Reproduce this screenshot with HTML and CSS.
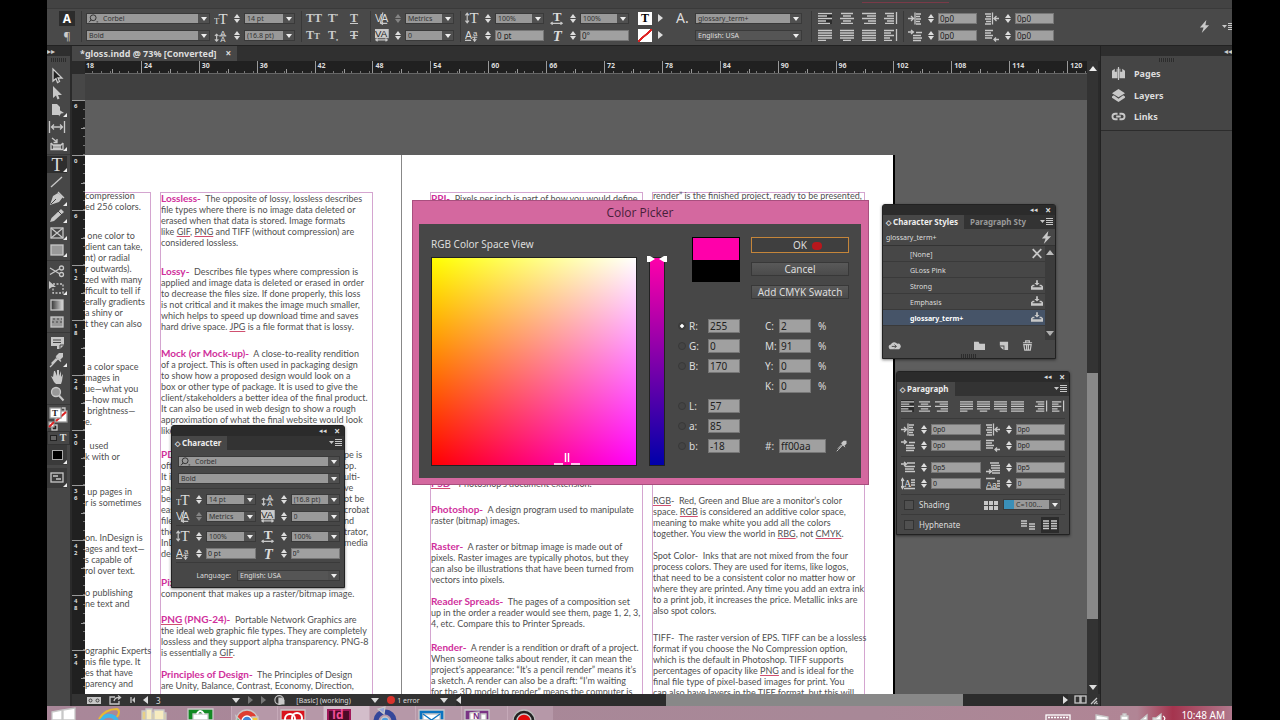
FILE: index.html
```html
<!DOCTYPE html>
<html lang="en">
<head>
<meta charset="utf-8">
<title>gloss.indd</title>
<link rel="stylesheet" href="styles.css">
</head>
<body>
<svg class="defs" aria-hidden="true">
  <symbol id="left" viewBox="0 0 14 12"><path d="M0 1.500h14M0 4h9M0 6.500h14M0 9h8M0 11.500h12"/></symbol>
  <symbol id="center" viewBox="0 0 14 12"><path d="M1 1.500h12M3 4h8M0 6.500h14M3 9h8M1 11.500h12"/></symbol>
  <symbol id="right" viewBox="0 0 14 12"><path d="M0 1.500h14M5 4h9M0 6.500h14M6 9h8M2 11.500h12"/></symbol>
  <symbol id="jleft" viewBox="0 0 14 12"><path d="M0 1.500h14M0 4h14M0 6.500h14M0 9h14M0 11.500h8"/></symbol>
  <symbol id="jcenter" viewBox="0 0 14 12"><path d="M0 1.500h14M0 4h14M0 6.500h14M0 9h14M3 11.500h8"/></symbol>
  <symbol id="jright" viewBox="0 0 14 12"><path d="M0 1.500h14M0 4h14M0 6.500h14M0 9h14M6 11.500h8"/></symbol>
  <symbol id="jall" viewBox="0 0 14 12"><path d="M0 1.500h14M0 4h14M0 6.500h14M0 9h14M0 11.500h14"/></symbol>
  <symbol id="spine1" viewBox="0 0 14 12"><path d="M1 1.500h9M3 4h7M0 6.500h10M3 9h7M1 11.500h9M12.500 0v12"/></symbol>
  <symbol id="spine2" viewBox="0 0 14 12"><path d="M0 1.500h10M0 4h7M0 6.500h10M0 9h6M0 11.500h8M12.500 0v12"/></symbol>
  <symbol id="indL" viewBox="0 0 14 12"><path d="M0 6h5M3 3.500L5.500 6L3 8.500M7 0v12M8 1.500h5M8 4h4M8 6.500h5M8 9h4M8 11.500h5"/></symbol>
  <symbol id="indR" viewBox="0 0 14 12"><path d="M14 6H10M11.500 3.500L9 6l2.500 2.500M7.500 0v12M0 1.500h6M1 4h5M0 6.500h6M1 9h5M0 11.500h6"/></symbol>
  <symbol id="indF" viewBox="0 0 14 12"><path d="M0 2.500h5M3 .5L5.500 2.500L3 4.500M8 3h6M5 6h8M5 8.500h9M5 11h8"/></symbol>
  <symbol id="indE" viewBox="0 0 14 12"><path d="M0 1h8M0 3.500h6M0 6h8M0 8.500h7M14 10H9M11 8L9 10l2 2"/></symbol>
  <symbol id="spB" viewBox="0 0 14 12"><path d="M0 2.500h5M3 .5L5.500 2.500L3 4.500M6 1.500h8M4 5h10M4 7.500h9M4 10h10"/></symbol>
  <symbol id="spA" viewBox="0 0 14 12"><path d="M4 1.500h9M5 4h9M5 6.500h9M0 10h5M3 8L5.500 10L3 12M6 9h8M6 11.500h8"/></symbol>
  <symbol id="size" viewBox="0 0 16 14"><text x="5" y="13" font-size="17">T</text><text x="0" y="13" font-size="10">T</text></symbol>
  <symbol id="leading" viewBox="0 0 16 14"><text x="7" y="7" font-size="9" class="sans">A</text><text x="7" y="14" font-size="9" class="sans">A</text><path d="M6 7.500h8M3 6v7M1 7.500L3 5.500L5 7.500M1 11.500L3 13.500L5 11.500"/></symbol>
  <symbol id="kern" viewBox="0 0 16 14"><text x="0" y="11" font-size="12" class="sans">V</text><text x="7" y="11" font-size="12" class="sans">A</text><path d="M9 0L6 13M7 12.500h7M9 11L7 12.500L9 14"/></symbol>
  <symbol id="track" viewBox="0 0 16 14"><rect x="0" y="0" width="15" height="9.500" fill="#ccc"/><text x="0" y="9" font-size="11" class="sans dark">VA</text><path d="M1 12h13M3 10.500L1 12l2 1.500M12 10.500L14 12l-2 1.500"/></symbol>
  <symbol id="vscale" viewBox="0 0 16 14"><text x="5" y="12" font-size="17">T</text><path d="M2.500 2v9M.5 3.500L2.500 1L4.500 3.500M.5 9.500L2.500 12L4.500 9.500"/></symbol>
  <symbol id="hscale" viewBox="0 0 16 14"><text x="3" y="10" font-size="15" font-weight="bold">T</text><path d="M1 12.500h13M3 11L1 12.500l2 1.500M12 11L14 12.500l-2 1.500"/></symbol>
  <symbol id="baseline" viewBox="0 0 16 14"><text x="0" y="11" font-size="12" class="sans">A</text><text x="9" y="7" font-size="9" class="sans">a</text><path d="M0 12.500h7M8 9h6M11 8v5M9 11l2 2.500L13 11"/></symbol>
  <symbol id="skew" viewBox="0 0 16 14"><text x="3" y="13" font-size="17" font-style="italic" font-weight="bold">T</text></symbol>
  <symbol id="drop" viewBox="0 0 14 12"><path d="M1.500 2v8M0 3.500L1.500 1L3 3.500M0 8.500L1.500 11L3 8.500M10 2.500h4M10 5h4M10 7.500h4M3 11h11"/><text x="3" y="9" font-size="10">A</text></symbol>
  <symbol id="dropn" viewBox="0 0 14 12"><path d="M0 1h9M11 3.500h3M11 6h3M11 8.500h3M0 11.500h14"/><text x="0" y="10" font-size="9" class="sans">Aa</text></symbol>
  <symbol id="mag" viewBox="0 0 14 12"><circle cx="6" cy="4.500" r="3.500"/><path d="M3.500 7L1 10M10 9.500h2"/></symbol>
  <symbol id="bolt" viewBox="0 0 12 14"><path class="f" d="M8 0L1 8h4L3 14l8-8.500H7z"/></symbol>
  <symbol id="menu" viewBox="0 0 14 10"><path class="f" d="M0 3h5L2.500 6z"/><path d="M6 1.500h7M6 3.500h7M6 5.500h7M6 7.500h7"/></symbol>
  <symbol id="tray" viewBox="0 0 14 12"><path class="f" d="M0 11V7l2-2h2v2H2v1h10V7h-2V5h2l2 2v4zM6 0h2v3h2L7 6L4 3h2z"/></symbol>
  <symbol id="dropper" viewBox="0 0 16 16"><path class="f" d="M10 1h4v4l-3 3-4-4z"/><path d="M9.500 6L3 13l-2 2M7 4.500l5 5M7.500 6.500L2.500 11.500"/></symbol>
</svg>

<div class="screen">
  <header class="control-bar">
    <div class="grp modes">
      <button class="mode on" aria-label="Character formatting">A</button>
      <button class="mode" aria-label="Paragraph formatting">¶</button>
    </div>
    <div class="grp sep fonts">
      <label class="combo find"><svg><use href="#mag"/></svg><select aria-label="Font"><option>Corbel</option></select></label>
      <label class="combo"><select aria-label="Style"><option>Bold</option></select></label>
    </div>
    <div class="grp w52">
      <div class="cell"><svg><use href="#size"/></svg><button class="spin" aria-label="Step size"></button><label class="combo"><select aria-label="Size"><option>14 pt</option></select></label></div>
      <div class="cell"><svg><use href="#leading"/></svg><button class="spin" aria-label="Step leading"></button><label class="combo"><select aria-label="Leading"><option>(16.8 pt)</option></select></label></div>
    </div>
    <div class="grp sep cases">
      <button>TT</button><button>T<sup>•</sup></button><button class="u">T</button>
      <button>T<small>T</small></button><button>T<sub>•</sub></button><button class="s">T</button>
    </div>
    <div class="grp sep">
      <div class="cell"><svg><use href="#kern"/></svg><button class="spin dim" aria-label="Step kerning"></button><label class="combo"><select aria-label="Kerning"><option>Metrics</option></select></label></div>
      <div class="cell"><svg><use href="#track"/></svg><button class="spin" aria-label="Step tracking"></button><label class="combo"><select aria-label="Tracking"><option>0</option></select></label></div>
    </div>
    <div class="grp sep">
      <div class="cell"><svg><use href="#vscale"/></svg><button class="spin" aria-label="Step vertical scale"></button><label class="combo"><select aria-label="Vertical scale"><option>100%</option></select></label></div>
      <div class="cell"><svg><use href="#baseline"/></svg><button class="spin" aria-label="Step baseline"></button><input aria-label="Baseline shift" value="0 pt"></div>
    </div>
    <div class="grp">
      <div class="cell"><svg><use href="#hscale"/></svg><button class="spin" aria-label="Step horizontal scale"></button><label class="combo"><select aria-label="Horizontal scale"><option>100%</option></select></label></div>
      <div class="cell"><svg><use href="#skew"/></svg><button class="spin" aria-label="Step skew"></button><input aria-label="Skew" value="0°"></div>
    </div>
    <div class="grp paint">
      <button class="chip">T</button><button class="play" aria-label="Fill options"></button>
      <button class="chip none" aria-label="Stroke none"></button><button class="play" aria-label="Stroke options"></button>
    </div>
    <div class="grp styles">
      <span class="bigA">A.</span><label class="combo"><select aria-label="Character style"><option>glossary_term+</option></select></label>
      <span></span><label class="combo darkbox"><select aria-label="Language"><option>English: USA</option></select></label>
    </div>
    <div class="grp sep aligns">
      <button class="on" aria-label="Align left"><svg><use href="#left"/></svg></button><button aria-label="Align center"><svg><use href="#center"/></svg></button><button aria-label="Align right"><svg><use href="#right"/></svg></button><button aria-label="Toward spine"><svg><use href="#spine1"/></svg></button>
      <button aria-label="Justify left"><svg><use href="#jleft"/></svg></button><button aria-label="Justify center"><svg><use href="#jcenter"/></svg></button><button aria-label="Justify all"><svg><use href="#jall"/></svg></button><button aria-label="Away from spine"><svg><use href="#spine2"/></svg></button>
    </div>
    <div class="grp sep w39">
      <div class="cell"><svg><use href="#indL"/></svg><button class="spin" aria-label="Step left indent"></button><input aria-label="Left indent" value="0p0"></div>
      <div class="cell"><svg><use href="#indF"/></svg><button class="spin" aria-label="Step first line"></button><input aria-label="First line indent" value="0p0"></div>
    </div>
    <div class="grp w39">
      <div class="cell"><svg><use href="#indR"/></svg><button class="spin" aria-label="Step right indent"></button><input aria-label="Right indent" value="0p0"></div>
      <div class="cell"><svg><use href="#indE"/></svg><button class="spin" aria-label="Step last line"></button><input aria-label="Last line indent" value="0p0"></div>
    </div>
    <div class="bar-end"><svg class="bolt"><use href="#bolt"/></svg><svg class="menu"><use href="#menu"/></svg></div>
  </header>

  <main class="work">
    <nav class="tools">
      <div class="dock-top">▸▸</div>
      <div class="grip"></div>
      <div class="tgroup">
        <button aria-label="Selection"><svg viewBox="0 0 18 16"><path d="M5 1v12l3-2.500 1.500 4 2-1-1.500-3.500h4z" class="hollow"/></svg></button>
        <button aria-label="Direct selection"><svg viewBox="0 0 18 16"><path d="M5 1v12l3-2.500 1.500 4 2-1-1.500-3.500h4z" class="f"/></svg></button>
        <button class="more" aria-label="Page"><svg viewBox="0 0 18 16"><path d="M4 2h5l3 3v8H4z" class="f"/><path d="M10 7l6 4-3 .5-2 3z" class="f"/></svg></button>
        <button aria-label="Gap"><svg viewBox="0 0 18 16"><path d="M1.500 2v12M16.500 2v12M4 8h10M6 5.500L3.500 8L6 10.500M12 5.500L14.500 8L12 10.500"/></svg></button>
        <button class="more" aria-label="Content collector"><svg viewBox="0 0 18 16"><path d="M3 7v6.500h12V7M5 10h8M5 12h8M3 7l2 2h8l2-2M4 2l5 4M9 3v3.500H5.500"/></svg></button>
      </div>
      <div class="tgroup">
        <button class="more sel" aria-label="Type">T</button>
        <button aria-label="Line"><svg viewBox="0 0 18 16"><path d="M3 13L14 3"/></svg></button>
        <button class="more" aria-label="Pen"><svg viewBox="0 0 18 16"><path d="M2 14l3-9 5-3 5 4-4 5z" class="f"/><path d="M10 1l6 6"/><path d="M3 13l5-5" class="k"/></svg></button>
        <button class="more" aria-label="Pencil"><svg viewBox="0 0 18 16"><path d="M2 14l1.500-4L13 1l3 3-10 9z" class="f"/><path d="M10 3l4 4" class="k"/></svg></button>
        <button class="more" aria-label="Frame"><svg viewBox="0 0 18 16"><rect x="3" y="3" width="12" height="10"/><path d="M3 3l12 10M15 3L3 13"/></svg></button>
        <button class="more" aria-label="Rectangle"><svg viewBox="0 0 18 16"><rect x="3" y="3" width="12" height="10" class="g"/></svg></button>
      </div>
      <div class="tgroup">
        <button aria-label="Scissors"><svg viewBox="0 0 18 16"><circle cx="13.500" cy="5" r="2"/><circle cx="13.500" cy="11.500" r="2"/><path d="M2 5l10 6M2 11.500l10-6"/></svg></button>
        <button class="more" aria-label="Free transform"><svg viewBox="0 0 18 16"><rect x="5" y="4" width="10" height="9" stroke-dasharray="2 1.500"/><path d="M1 1v8l3-2h4z" class="f"/></svg></button>
        <button aria-label="Gradient"><svg viewBox="0 0 18 16"><defs><linearGradient id="gr"><stop stop-color="#333"/><stop offset="1" stop-color="#ddd"/></linearGradient></defs><rect x="3" y="3" width="12" height="10" fill="url(#gr)"/></svg></button>
        <button aria-label="Gradient feather"><svg viewBox="0 0 18 16"><rect x="3" y="3" width="12" height="10" class="g"/><path d="M5 5h2M9 5h2M13 5h1M4 8h2M8 8h2M12 8h2" class="k"/></svg></button>
      </div>
      <div class="tgroup">
        <button aria-label="Note"><svg viewBox="0 0 18 16"><path d="M3 2h13v8l-4 4H9v-3H3z" class="f"/><path d="M5 5h8M5 7.500h8M16 10h-4v4" class="k"/></svg></button>
        <button class="more" aria-label="Eyedropper"><svg viewBox="0 0 16 16"><use href="#dropper"/></svg></button>
        <button aria-label="Hand"><svg viewBox="0 0 18 16"><path d="M5 8L3 7l3 6 2 2h5l1-3 1-7-2 3V2l-2 5V1H9v6L7 2H6z" class="f"/></svg></button>
        <button aria-label="Zoom"><svg viewBox="0 0 18 16"><circle cx="8" cy="6" r="4.500" class="g"/><path d="M11 9.500l4.500 5" class="thick"/></svg></button>
      </div>
      <div class="fillstroke"><svg viewBox="0 0 20 24"><rect x="7" y="4" width="12" height="11" class="w"/><path d="M8 14L18 5" class="red"/><rect x="2" y="1" width="11" height="10" class="w"/><text x="4" y="9" font-size="9" class="dark" font-weight="bold">T</text><rect x="4" y="18" width="5" height="5" class="hollow"/><rect x="1" y="15" width="5" height="5" class="w"/><path d="M1 20l5-5" class="red"/><path d="M14 1h3v3"/></svg></div>
      <div class="twin"><button aria-label="Formatting affects container"><i></i></button><button>T</button></div>
      <button class="big more" aria-label="Apply color"><i class="black"></i></button>
      <button class="big more" aria-label="Screen mode"><svg viewBox="0 0 18 16"><rect x="3" y="3" width="12" height="9"/><path d="M5 6h5M8 9h5"/></svg></button>
    </nav>

    <section class="doc">
      <div class="tabs"><div class="tab">*gloss.indd @ 73% [Converted]<button aria-label="Close">×</button></div></div>
      <div class="view">
        <div class="corner"></div>
        <div class="hruler"><div class="marks"><span>18</span><span>24</span><span>30</span><span>36</span><span>42</span><span>48</span><span>54</span><span>60</span><span>66</span><span>72</span><span>78</span><span>84</span><span>90</span><span>96</span><span>102</span><span>108</span><span>114</span><span>120</span></div></div>
        <div class="vruler"><span>6</span><span>0</span><span>6</span><span>1 2</span><span>1 8</span><span>2 4</span><span>3 0</span><span>3 6</span><span>4 2</span><span>4 8</span><span>5 4</span></div>
        <div class="canvas">
          <div class="spread">
            <div class="page verso">
              <div class="frame cut cont">
                <p>compression<br>ed 256 colors.</p>
                <p class="g18">&nbsp;one color to<br>dient can take,<br>nt) or radial<br>r outwards).<br>zed with many<br>fficult to tell if<br>erally gradients<br>a shiny or<br>t they can also</p>
                <p class="g32">&nbsp;a color space<br>mages in<br>ue—what you<br>—how much<br>&nbsp;brightness—<br>e.</p>
                <p class="g13">&nbsp;&nbsp;used<br>k with or</p>
                <p class="g24">&nbsp;up pages in<br>r is sometimes</p>
                <p class="g24">on. InDesign is<br>ages and text—<br>s capable of<br>rol over text.</p>
                <p class="g11">o publishing<br>ne text and</p>
                <p class="g36">ographic Experts<br>nis file type. It<br>es that have<br>parency and</p>
              </div>
              <div class="frame">
                <p><b>Lossless-</b>&nbsp; The opposite of lossy, lossless describes<br>file types where there is no image data deleted or<br>erased when that data is stored. Image formats<br>like <u>GIF</u>, <u>PNG</u> and TIFF (without compression) are<br>considered lossless.</p>
                <p class="g18"><b>Lossy-</b>&nbsp; Describes file types where compression is<br>applied and image data is deleted or erased in order<br>to decrease the files size. If done properly, this loss<br>is not critical and it makes the image much smaller,<br>which helps to speed up download time and saves<br>hard drive space. <u>JPG</u> is a file format that is lossy.</p>
                <p class="g16"><b>Mock (or Mock-up)-</b>&nbsp; A close-to-reality rendition<br>of a project. This is often used in packaging design<br>to show how a proposed design would look on a<br>box or other type of package. It is used to give the<br>client/stakeholders a better idea of the final product.<br>It can also be used in web design to show a rough<br>approximation of what the final website would look<br>like.</p>
                <div class="split g13"><span><b>PDF</b></span><span>pe is</span><span>often</span><span>op.</span><span>It is</span><span>ulti-</span><span>page</span><span>ve</span><span>be</span><span>ot be</span><span>easy</span><span>crobat</span><span>files</span><span>nd</span><span>the</span><span>trator,</span><span>InDe</span><span>media</span><span>de</span><span></span></div>
                <p class="g18"><b>Pixel-</b>&nbsp; Short for picture element; a single<br>component that makes up a raster/bitmap image.</p>
                <p class="g15"><b><u>PNG</u> (PNG-24)-</b>&nbsp; Portable Network Graphics are<br>the ideal web graphic file types. They are completely<br>lossless and they support alpha transparency. PNG-8<br>is essentially a <u>GIF</u>.</p>
                <p class="g11"><b>Principles of Design-</b>&nbsp; The Principles of Design<br>are Unity, Balance, Contrast, Economy, Direction,</p>
              </div>
            </div>
            <div class="page recto">
              <div class="frame">
                <p><b><u>PPI</u>-</b>&nbsp; Pixels per inch is part of how you would define</p>
                <p class="under"><b><u>PSD</u>-</b>&nbsp; Photoshop’s document extension.</p>
                <p class="g15"><b>Photoshop-</b>&nbsp; A design program used to manipulate<br>raster (bitmap) images.</p>
                <p class="g15"><b>Raster-</b>&nbsp; A raster or bitmap image is made out of<br>pixels. Raster images are typically photos, but they<br>can also be illustrations that have been turned from<br>vectors into pixels.</p>
                <p class="g11"><b>Reader Spreads-</b>&nbsp; The pages of a composition set<br>up in the order a reader would see them, page 1, 2, 3,<br>4, etc. Compare this to Printer Spreads.</p>
                <p class="g13"><b>Render-</b>&nbsp; A render is a rendition or draft of a project.<br>When someone talks about render, it can mean the<br>project’s appearance: “It’s a pencil render” means it’s<br>a sketch. A render can also be a draft: “I’m waiting<br>for the 3D model to render” means the computer is</p>
              </div>
              <div class="frame cont">
                <p>render” is the finished project, ready to be presented,</p>
                <p class="under2"><u>RGB</u>-&nbsp; Red, Green and Blue are a monitor’s color<br>space. <u>RGB</u> is considered an additive color space,<br>meaning to make white you add all the colors<br>together. You view the world in <u>RBG</u>, not <u>CMYK</u>.</p>
                <p class="g11">Spot Color-&nbsp; Inks that are not mixed from the four<br>process colors. They are used for items, like logos,<br>that need to be a consistent color no matter how or<br>where they are printed. Any time you add an extra ink<br>to a print job, it increases the price. Metallic inks are<br>also spot colors.</p>
                <p class="g16">TIFF-&nbsp; The raster version of EPS. TIFF can be a lossless<br>format if you choose the No Compression option,<br>which is the default in Photoshop. TIFF supports<br>percentages of opacity like <u>PNG</u> and is ideal for the<br>final file type of pixel-based images for print. You<br>can also have layers in the TIFF format, but this will</p>
              </div>
            </div>
          </div>
        </div>
        <div class="vscroll"><i class="up"></i><div class="thumb"></div><i class="down"></i></div>
      </div>
      <footer class="status">
        <div class="nav">
          <svg viewBox="0 0 50 12" class="first"><rect x="2" y="3" width="14" height="7" class="f"/><circle cx="5.500" cy="6.500" r="1.500" class="k"/><circle cx="12.500" cy="6.500" r="1.500" class="k"/><path d="M30 3h-5v7h9V7M29 7q1-4 6-3.500M33 1.500L35.500 3.500L33 5.500"/><path d="M46 3v6"/><path class="f" d="M50 3v6l-3-3z"/></svg>
          <i class="lt"></i><span class="num">3</span><i class="dn"></i><i class="rt dim"></i><i class="rt dim"></i>
          <svg viewBox="0 0 16 12" class="pf"><circle cx="6" cy="6" r="5"/><path d="M5 3h4l3 3v5H5z" class="f"/></svg>
          <span class="grow">[Basic] (working)</span><i class="dn"></i><b class="err"></b><span class="grow">1 error</span><i class="dn"></i>
        </div>
        <div class="hscroll"><i class="lt"></i><div class="thumb"></div><i class="rt"></i></div>
        <svg viewBox="0 0 26 12" class="end"><rect x="1" y="2" width="5" height="7"/><rect x="7" y="2" width="5" height="7"/><path d="M17 10l6-6M20 10l3-3M22.500 10l1-1"/></svg>
      </footer>
    </section>

    <aside class="dock">
      <div class="dock-top r">◂◂</div>
      <div class="grip"></div>
      <button><svg viewBox="0 0 16 14"><path class="f" d="M1 4l3-2v3h2V2h1v10H1zM9 2h1v3h2V2l3 2v8H9z"/><path d="M8 0v14"/></svg>Pages</button>
      <button><svg viewBox="0 0 16 14"><path class="f" d="M8 0l7 4.500L8 9L1 4.500zM1 8l2-1.200L8 10.500l5-3.700L15 8v1.500L8 14L1 9.500z"/></svg>Layers</button>
      <button><svg viewBox="0 0 16 14"><path class="thick" d="M7 4H4.500a3 3 0 0 0 0 6H7M9 4h2.500a3 3 0 0 1 0 6H9M5.500 7h5"/></svg>Links</button>
    </aside>
  </main>

  <footer class="taskbar">
    <button aria-label="Start"><svg viewBox="0 0 28 14"><path fill="#fff" d="M3 6l10-2v10H3zM14 4l12-2v12H14z"/></svg></button>
    <button aria-label="Internet Explorer"><svg viewBox="0 0 28 14"><path d="M5 17a9 9 0 0 1 17-2" stroke="#3fb7ec" stroke-width="4"/><path d="M4 13Q10 3 22 3q4 2 0 8" stroke="#e8b934" stroke-width="2"/></svg></button>
    <button aria-label="File Explorer"><svg viewBox="0 0 28 14"><path fill="#e8d088" d="M1 5h8l2 2h14v7H1z"/><path fill="#f7ecc0" d="M5 3h6v11H5zM13 4h10v10H13z"/></svg></button>
    <button aria-label="Store"><svg viewBox="0 0 28 14"><path fill="#128a22" d="M1 3h25v11H1z"/><path fill="#fff" d="M6 8h15v6H6z"/><path d="M10 8q3-6 7 0" stroke="#fff" stroke-width="2"/></svg></button>
    <button class="open" aria-label="Chrome"><svg viewBox="0 0 28 14"><circle cx="13" cy="15" r="11" fill="#df3f32"/><path fill="#3ba757" d="M2 10l8 8H4z"/><path fill="#f5ca3b" d="M18 11h6v6h-6z"/><circle cx="13" cy="15" r="5" fill="#4285d8" stroke="#fff"/></svg></button>
    <button class="open" aria-label="Creative Cloud"><svg viewBox="0 0 28 14"><path fill="#d9141d" d="M1 4h24v10H1z"/><circle cx="10" cy="13" r="5" stroke="#fff" stroke-width="2"/><circle cx="17" cy="12" r="5" stroke="#fff" stroke-width="2"/></svg></button>
    <button class="open cur" aria-label="InDesign"><svg viewBox="0 0 28 14"><path fill="#4b0a28" stroke="#a1195a" stroke-width="2" d="M2 4h22v14H2z"/></svg><span>Id</span></button>
    <button class="open" aria-label="Sync"><svg viewBox="0 0 28 14"><circle cx="13" cy="15" r="9" stroke="#35479a" stroke-width="5"/><path fill="#9aa8d8" d="M6 3l7-2-1 7z"/><circle cx="13" cy="15" r="4" fill="#4a9be0"/></svg></button>
    <button class="open" aria-label="Mail"><svg viewBox="0 0 28 14"><path fill="#0a73c0" d="M1 4h25v10H1z"/><path fill="#fff" d="M5 8h17v6H5z"/><path d="M5 8l8.500 6L22 8" stroke="#0a73c0"/></svg></button>
    <button class="open" aria-label="OneNote"><svg viewBox="0 0 28 14"><path fill="#7a3384" d="M1 4h24v10H1z"/><path fill="#fff" d="M6 7l9-1v8H6zM17 8h5v6h-5z"/></svg><span class="small">N</span></button>
    <button class="open" aria-label="Recorder"><svg viewBox="0 0 28 14"><circle cx="14" cy="15" r="11" fill="#222" stroke="#bbb"/><circle cx="14" cy="15" r="7" fill="#e00b0b"/></svg></button>
    <div class="sys">
      <svg viewBox="0 0 124 14"><rect x="1" y="9" width="24" height="8" stroke="#fff"/><path d="M3 11.500h20" stroke="#fff" stroke-dasharray="2 1"/><path fill="#fff" d="M51 9l6 1 6 1v3H51zM76 10h7v4h-7zM78 8h3v2h-3zM96 14l6-5v5zM108 12h3l5-4v6h-8z"/><path d="M118 10q3 2 1 4" stroke="#fff"/></svg>
      <time>10:48 AM</time>
    </div>
  </footer>

  <section class="panel character">
    <div class="ptop"><span>◂◂</span><button aria-label="Close">×</button></div>
    <div class="ptabs"><span class="cur">Character</span><svg class="menu"><use href="#menu"/></svg></div>
    <div class="pbody">
      <label class="combo find"><svg><use href="#mag"/></svg><select aria-label="Font"><option>Corbel</option></select></label>
      <label class="combo"><select aria-label="Style"><option>Bold</option></select></label>
      <div class="pairs line">
        <div class="cell"><svg><use href="#size"/></svg><button class="spin" aria-label="Step size"></button><label class="combo"><select aria-label="Size"><option>14 pt</option></select></label></div>
        <div class="cell"><svg><use href="#leading"/></svg><button class="spin" aria-label="Step leading"></button><label class="combo"><select aria-label="Leading"><option>(16.8 pt)</option></select></label></div>
        <div class="cell"><svg><use href="#kern"/></svg><button class="spin dim" aria-label="Step kerning"></button><label class="combo"><select aria-label="Kerning"><option>Metrics</option></select></label></div>
        <div class="cell"><svg><use href="#track"/></svg><button class="spin" aria-label="Step tracking"></button><label class="combo"><select aria-label="Tracking"><option>0</option></select></label></div>
      </div>
      <div class="pairs line">
        <div class="cell"><svg><use href="#vscale"/></svg><button class="spin" aria-label="Step vertical scale"></button><label class="combo"><select aria-label="Vertical scale"><option>100%</option></select></label></div>
        <div class="cell"><svg><use href="#hscale"/></svg><button class="spin" aria-label="Step horizontal scale"></button><label class="combo"><select aria-label="Horizontal scale"><option>100%</option></select></label></div>
        <div class="cell"><svg><use href="#baseline"/></svg><button class="spin" aria-label="Step baseline"></button><input aria-label="Baseline shift" value="0 pt"></div>
        <div class="cell"><svg><use href="#skew"/></svg><button class="spin" aria-label="Step skew"></button><input aria-label="Skew" value="0°"></div>
      </div>
      <div class="lang line"><label for="lang">Language:</label><div class="combo darkbox"><select id="lang"><option>English: USA</option></select></div></div>
    </div>
  </section>

  <section class="panel charstyles">
    <div class="ptop"><span>◂◂</span><button aria-label="Close">×</button></div>
    <div class="ptabs"><span class="cur">Character Styles</span><span>Paragraph Sty</span><svg class="menu"><use href="#menu"/></svg></div>
    <div class="applied">glossary_term+<svg class="bolt"><use href="#bolt"/></svg></div>
    <div class="listwrap">
      <ul>
        <li>[None]<svg viewBox="0 0 14 12"><path class="thick" d="M2 1l10 10M12 1L2 11"/></svg></li>
        <li>GLoss Pink</li>
        <li>Strong<svg><use href="#tray"/></svg></li>
        <li>Emphasis<svg><use href="#tray"/></svg></li>
        <li class="sel">glossary_term+<svg><use href="#tray"/></svg></li>
      </ul>
      <div class="mini"><i class="up"></i><i class="dn"></i></div>
    </div>
    <div class="pfoot">
      <svg viewBox="0 0 14 12"><path class="f" d="M1 9a3 3 0 0 1 2-4 4 4 0 0 1 7-1 3 3 0 0 1 3 5l-1 1H2z"/><path class="k" d="M4 7h5M7 5l2 2-2 2"/></svg>
      <svg viewBox="0 0 14 12"><path class="f" d="M1 2h5l1 2h6v7H1z"/></svg>
      <svg viewBox="0 0 14 12"><path class="f" d="M3 2h9v9H8V6H3z"/><path class="f" d="M3 7l4 4V7z"/></svg>
      <svg viewBox="0 0 14 12"><path d="M2 3h10M5 3V1h4v2M3 5l1 6h6l1-6zM6 5v6M8 5v6"/></svg>
    </div>
    <div class="grip"></div>
  </section>

  <section class="panel paragraph">
    <div class="ptop"><span>◂◂</span><button aria-label="Close">×</button></div>
    <div class="ptabs"><span class="cur">Paragraph</span><svg class="menu"><use href="#menu"/></svg></div>
    <div class="pbody">
      <div class="alignrow">
        <div><button class="on" aria-label="Align left"><svg><use href="#left"/></svg></button><button aria-label="Align center"><svg><use href="#center"/></svg></button><button aria-label="Align right"><svg><use href="#right"/></svg></button></div>
        <div><button aria-label="Justify left"><svg><use href="#jleft"/></svg></button><button aria-label="Justify center"><svg><use href="#jcenter"/></svg></button><button aria-label="Justify right"><svg><use href="#jright"/></svg></button><button aria-label="Justify all"><svg><use href="#jall"/></svg></button></div>
        <div><button aria-label="Toward spine"><svg><use href="#spine1"/></svg></button><button aria-label="Away from spine"><svg><use href="#spine2"/></svg></button></div>
      </div>
      <div class="pairs line">
        <div class="cell"><svg><use href="#indL"/></svg><button class="spin" aria-label="Step"></button><input aria-label="Left indent" value="0p0"></div>
        <div class="cell"><svg><use href="#indR"/></svg><button class="spin" aria-label="Step"></button><input aria-label="Right indent" value="0p0"></div>
        <div class="cell"><svg><use href="#indF"/></svg><button class="spin" aria-label="Step"></button><input aria-label="First line indent" value="0p0"></div>
        <div class="cell"><svg><use href="#indE"/></svg><button class="spin" aria-label="Step"></button><input aria-label="Last line indent" value="0p0"></div>
      </div>
      <div class="pairs line">
        <div class="cell"><svg><use href="#spB"/></svg><button class="spin" aria-label="Step"></button><input aria-label="Space before" value="0p5"></div>
        <div class="cell"><svg><use href="#spA"/></svg><button class="spin" aria-label="Step"></button><input aria-label="Space after" value="0p5"></div>
        <div class="cell"><svg><use href="#drop"/></svg><button class="spin" aria-label="Step"></button><input aria-label="Drop cap lines" value="0"></div>
        <div class="cell"><svg><use href="#dropn"/></svg><button class="spin" aria-label="Step"></button><input aria-label="Drop cap characters" value="0"></div>
      </div>
      <div class="opt line"><input type="checkbox" id="shade"><label for="shade">Shading</label><svg viewBox="0 0 14 12"><path class="f" d="M0 2h14v9H0z"/><path class="k" d="M0 6.500h14M4.500 2v9M9.500 2v9"/></svg><label class="combo tint"><i></i><select aria-label="Shading color"><option>C=100...</option></select></label></div>
      <div class="opt line"><input type="checkbox" id="hyph"><label for="hyph">Hyphenate</label><svg viewBox="0 0 14 12"><path d="M0 2h6M0 4.500h6M0 7h6M8 5h6M8 7.500h6M8 10h6"/></svg><svg viewBox="0 0 14 12" class="on"><path d="M0 2h6M0 4.500h6M0 7h6M0 9.500h6M8 2h6M8 4.500h6M8 7h6M8 9.500h6"/></svg></div>
    </div>
  </section>

  <section class="dialog" role="dialog" aria-labelledby="dt">
    <h1 id="dt">Color Picker</h1>
    <div class="dbody">
      <div class="space">
        <h2>RGB Color Space View</h2>
        <div class="field"><svg viewBox="0 0 28 12" class="mark"><path d="M11.500 0v9M14.500 0v9M0 11h9M17 11h9"/></svg></div>
      </div>
      <div class="slider"><svg viewBox="0 0 20 8"><path d="M0 1h3l5 3-5 3H0zM20 1h-3l-5 3 5 3h3z"/></svg></div>
      <div class="values">
        <div class="swatch"><i></i></div>
        <div class="actions"><button class="ok">OK<i class="pointer"></i></button><button>Cancel</button><button>Add CMYK Swatch</button></div>
        <div class="rgb">
          <input type="radio" name="ch" id="r" checked><label for="r">R:</label><input aria-label="Red" value="255">
          <input type="radio" name="ch" id="g"><label for="g">G:</label><input aria-label="Green" value="0">
          <input type="radio" name="ch" id="b"><label for="b">B:</label><input aria-label="Blue" value="170">
          <div class="blank"></div>
          <input type="radio" name="ch" id="l"><label for="l">L:</label><input aria-label="Lightness" value="57">
          <input type="radio" name="ch" id="la"><label for="la">a:</label><input aria-label="Lab a" value="85">
          <input type="radio" name="ch" id="lb"><label for="lb">b:</label><input aria-label="Lab b" value="-18">
        </div>
        <div class="cmyk">
          <label for="c">C:</label><input id="c" value="2"><span>%</span>
          <label for="m">M:</label><input id="m" value="91"><span>%</span>
          <label for="y">Y:</label><input id="y" value="0"><span>%</span>
          <label for="k">K:</label><input id="k" value="0"><span>%</span>
          <div class="blank"></div>
          <div class="blank"></div>
          <div class="hex"><label for="hex">#:</label><input id="hex" value="ff00aa"><svg><use href="#dropper"/></svg></div>
        </div>
      </div>
    </div>
  </section>
</div>
</body>
</html>
```

FILE: styles.css
```css
* { box-sizing: border-box; }
body { margin: 0; background: #000; color: #ddd; font-family: "Noto Sans", sans-serif; font-size: 8px; line-height: 11px; }
.defs { display: none; }
button, input, select { font: inherit; color: inherit; margin: 0; padding: 0; border: 0; background: none; border-radius: 0; min-width: 0; }
svg { display: block; width: 14px; height: 12px; fill: none; stroke: #c8c8c8; stroke-width: 1.3; overflow: visible; }
svg text { fill: #dcdcdc; stroke: none; font-family: "Liberation Serif", serif; }
svg text.sans { font-family: "Liberation Sans", sans-serif; }
svg text.dark { fill: #222; }
.f { fill: #c8c8c8; stroke: none; }
.g { fill: #999; }
.w { fill: #fff; stroke: #999; }
.k { stroke: #444; fill: none; stroke-width: 1; }
.hollow { fill: #222; stroke: #ccc; }
.thick { stroke-width: 2; }
.red { stroke: #d22; stroke-width: 2; }

.screen { position: relative; display: flex; flex-direction: column; height: 100vh; margin: 0 48px 0 47px; overflow: hidden; background: #474747; }

/* control bar */
.control-bar { display: flex; align-items: center; flex: none; height: 46px; padding: 8px 0 0 12px; border-bottom: 1px solid #222; background: linear-gradient(#7a3a48, #7a3a48) 815px 2px / 87px 1px no-repeat, linear-gradient(#434343 8px, #3a3a3a 8px, #3a3a3a 9px, #494949 9px); }
.grp { display: grid; grid-auto-rows: 14px; row-gap: 3px; margin-right: 6px; align-items: center; flex: none; width: 79px; }
.sep { border-left: 1px solid #383838; padding-left: 4px; width: 84px; }
.sep.w39 { width: 74px; margin-right: 8px; }
.grp.w39:not(.sep) { width: 69px; }
.modes { width: 16px; }
.mode { height: 15px; color: #ccc; font-size: 11px; }
.mode.on { background: #2c2c2c; color: #fff; font-weight: bold; font-size: 12px; }
.grp.fonts { width: 129px; margin-right: 4px; }
.w52 { width: 81px; }
.cell { display: grid; grid-template-columns: 16px 12px 1fr; column-gap: 1px; align-items: center; }
.cell svg { height: 13px; }
.combo { position: relative; display: flex; height: 11px; border: 1px solid #3a3a3a; background: #999; color: #333; font-size: 7px; }
.combo select { flex: 1; appearance: none; padding: 0 0 0 2px; line-height: 9px; height: 9px; }
.combo::after { content: ""; width: 11px; flex: none; background: #505050; }
.combo::before { content: ""; position: absolute; right: 2px; top: 3px; border: 3px solid transparent; border-top: 4px solid #eee; border-bottom: 0; }
.combo.find svg { width: 14px; height: 10px; stroke: #222; stroke-width: 1; flex: none; }
.darkbox { background: #555; color: #ddd; }
.cell input { width: 100%; height: 11px; background: #a0a0a0; color: #222; border: 1px solid #777; padding-left: 1px; }
.spin { position: relative; width: 8px; height: 11px; justify-self: center; }
.spin::before, .spin::after { content: ""; position: absolute; left: 1px; border: 3px solid transparent; }
.spin::before { top: 1px; border-top: 0; border-bottom: 4px solid #ddd; }
.spin::after { bottom: 1px; border-bottom: 0; border-top: 4px solid #ddd; }
.spin.dim { opacity: .4; }
.grp.cases { grid-template-columns: repeat(3, 14px); column-gap: 8px; width: 63px; }
.cases button { font: bold 12px/14px "Liberation Serif", serif; color: #ccc; white-space: nowrap; text-align: left; height: 14px; }
.cases sup, .cases sub { font-size: 6px; line-height: 0; }
.cases small { font-size: 9px; }
.cases .u { text-decoration: underline; }
.cases .s { text-decoration: line-through; }
.paint { grid-template-columns: 14px 8px; column-gap: 4px; width: 26px; margin: 0 12px 0 3px; }
.chip { height: 13px; background: #fff; color: #000; font: bold 12px/13px "Liberation Serif", serif; }
.none { background: linear-gradient(to bottom right, #fff 44%, #d22 45%, #d22 55%, #fff 56%); }
.play { justify-self: center; width: 0; height: 8px; border: 4px solid transparent; border-left: 5px solid #ddd; border-right: 0; }
.styles { grid-template-columns: 16px 107px; column-gap: 3px; width: 126px; margin-right: 9px; }
.bigA { font-size: 14px; line-height: 14px; }
.grp.aligns { grid-template-columns: repeat(4, 14px); column-gap: 8px; width: 86px; padding-left: 6px; }
.on { background: #2c2c2c; }
.bar-end { display: flex; flex: 1; justify-content: flex-end; align-items: center; gap: 12px; height: 20px; margin-right: -4px; }
.bolt { width: 11px; height: 13px; }
.menu { width: 14px; height: 10px; stroke-width: 1; }

/* work area */
.work { flex: 1; min-height: 0; display: flex; }
.tools { flex: none; width: 25px; border-right: 2px solid #2a2a2a; background: #474747; display: flex; flex-direction: column; }
.dock-top { height: 10px; background: #2e2e2e; font-size: 8px; line-height: 9px; color: #ccc; }
.dock-top.r { text-align: right; }
.grip { width: 16px; height: 4px; margin: 2px auto; flex: none; background: repeating-linear-gradient(90deg, #2c2c2c 0 1px, #474747 1px 2px); }
.tgroup { border-bottom: 1px solid #383838; padding-bottom: 2px; margin-top: 1px; }
.tools .grip + .tgroup { margin-top: 3px; padding-bottom: 2px; }
.tgroup button, .big { position: relative; display: grid; place-items: center; width: 20px; height: 17px; font: 18px/16px "Liberation Serif", serif; }
.tools svg { width: 18px; height: 16px; }
.more::after { content: ""; position: absolute; right: 0; bottom: 1px; border: 2px solid #eee; border-left-color: transparent; border-top-color: transparent; }
.sel { background: #2e2e2e; }
.tools .fillstroke { padding: 2px 0 0 1px; }
.tools .fillstroke svg { width: 20px; height: 24px; }
.twin { display: grid; grid-template-columns: 10px 10px; height: 14px; font: bold 10px/12px "Liberation Serif", serif; align-items: center; border: 1px solid #333; }
.twin i { display: block; height: 6px; width: 7px; margin: auto; background: #666; border: 1px solid #222; }
.big { height: 20px; margin-bottom: 3px; background: #3a3a3a; }
.black { width: 11px; height: 10px; background: #000; border: 1px solid #aaa; }
.doc { flex: 1; min-width: 0; display: flex; flex-direction: column; }
.tabs { height: 15px; flex: none; background: #303030; display: flex; }
.tab { background: #474747; font-weight: bold; font-size: 9px; line-height: 15px; padding: 0 6px 0 8px; display: flex; gap: 9px; white-space: nowrap; }
.tab button { font-size: 10px; }
.view { flex: 1; min-height: 0; display: grid; grid-template: 13px 1fr / 13px 1fr 13px; }
.corner { background: #2b2b2b; }
.hruler { background: #202020; overflow: hidden; border-bottom: 1px solid #666; }
.marks { display: flex; min-width: 1042px; margin-left: -2px; height: 12px; }
.marks span { flex: 1; border-left: 1px solid #999; padding-left: 2px; font-size: 7px; font-weight: bold; line-height: 9px; background: linear-gradient(#999, #999) 50% 100% / 1px 4px no-repeat, repeating-linear-gradient(90deg, #202020 0 8px, #777 8px 9px) 0 100% / 100% 2px no-repeat; }
.vruler { grid-row: 2; background: linear-gradient(#474747 26px, #202020 26px); padding-top: 26px; overflow: hidden; }
.vruler span { display: block; height: 55px; border-top: 1px solid #999; padding: 2px 7px 0 2px; font-size: 6px; font-weight: bold; line-height: 7px; background: linear-gradient(#999, #999) 100% 50% / 4px 1px no-repeat, repeating-linear-gradient(#202020 0 8px, #777 8px 9px) 100% 0 / 2px 100% no-repeat; }
.canvas { position: relative; overflow: hidden; background: linear-gradient(#404040 26px, #5e5e5e 26px); grid-row: 2; }
.spread { position: absolute; left: 0; top: 81px; bottom: 0; display: flex; background: #fff; border-right: 2px solid #000; }
.page { display: flex; gap: 9px; padding-top: 37px; }
.verso { width: 317px; border-right: 1px solid #888; }
.recto { width: 491px; padding-left: 28px; }
.frame { flex: none; width: 213px; border: 1px solid #d4a5d0; border-bottom: 0; color: #505050; font-family: Lato, sans-serif; font-size: 9px; line-height: 11px; white-space: nowrap; }
.cut { width: 66px; border-left: 0; }
.frame p { margin: 0; }
.frame.cont p:first-child { margin-top: -3px; }
.frame b { color: #d0309c; font-size: 10px; }
.frame u { text-decoration-color: #d05070; }
.frame .g11 { margin-top: 11px; } .frame .g13 { margin-top: 13px; } .frame .g15 { margin-top: 15px; } .frame .g16 { margin-top: 16px; }
.frame .g18 { margin-top: 18px; } .frame .g24 { margin-top: 24px; } .frame .g32 { margin-top: 32px; } .frame .g36 { margin-top: 36px; }
.frame .under { margin-top: 274px; }
.frame .under2 { margin-top: 294px; }
.split { display: grid; grid-template-columns: 183px 1fr; grid-auto-rows: 11px; }
.vscroll { grid-column: 3; grid-row: 1 / 3; background: #333; display: grid; grid-template-rows: 14px 298fr 246fr 75px; border-right: 2px solid #2a2a2a; }
.vscroll .thumb { grid-row: 3; background: #888; }
.up, .down, .dn, .lt, .rt { width: 0; height: 0; border: 4px solid transparent; flex: none; }
.up { border-top: 0; border-bottom: 5px solid #eee; place-self: center; }
.down, .dn { border-bottom: 0; border-top: 5px solid #ddd; }
.down { grid-row: 4; place-self: end center; margin-bottom: 4px; }
.lt { border-left: 0; border-right: 5px solid #ddd; }
.rt { border-right: 0; border-left: 5px solid #ddd; }
.dim { opacity: .4; }
.status { flex: none; height: 12px; background: #333; display: flex; align-items: center; }
.nav { width: 384px; padding: 0 8px 0 13px; display: flex; align-items: center; gap: 8px; }
.nav .first { width: 50px; }
.num { flex: 1 0 56px; }
.pf { width: 14px; }
.grow { white-space: nowrap; flex: 1 0 auto; font-size: 7px; }
.err { width: 8px; height: 8px; border-radius: 4px; background: #d8332c; flex: none; margin-right: -6px; }
.hscroll { flex: 1; display: grid; grid-template-columns: 5px 204fr 296fr 100fr 5px; align-items: center; background: #2c2c2c; }
.hscroll .thumb { grid-column: 3; height: 12px; background: #888; }
.hscroll .rt { grid-column: 5; }
.status .end { width: 26px; margin-left: 6px; }
.dock { flex: none; width: 132px; background: #454545; border-left: 1px solid #222; }
.dock button { display: flex; align-items: center; gap: 8px; width: 100%; height: 22px; padding-left: 10px; font-size: 9px; font-weight: bold; }
.dock .grip { margin-bottom: 0; }
.dock button svg { width: 15px; height: 13px; }
.dock button:last-child { border-bottom: 1px solid #2c2c2c; height: 25px; padding-bottom: 3px; }

/* taskbar */
.taskbar { flex: none; height: 14px; display: flex; overflow: hidden; background: linear-gradient(90deg, #a98799, #a88897 70%, #b18595 92%, #a5344e 95%, #b0788c); }
.taskbar button { position: relative; width: 46px; height: 14px; padding-left: 2px; flex: none; }
.taskbar button svg { width: 28px; height: 14px; }
.open { border-left: 1px solid #c5a9b8; background: #b698a8; }
.open.cur { background: #d3bdca; }
.taskbar span { position: absolute; left: 8px; top: 2px; font: bold 12px/14px "Open Sans", sans-serif; color: #f04e98; }
.taskbar .small { left: 11px; top: 5px; font-size: 8px; line-height: 10px; color: #7a3384; }
.sys { margin-left: auto; display: flex; gap: 12px; padding-right: 7px; }
.sys svg { width: 124px; height: 14px; }
time { color: #fff; font-size: 10px; line-height: 18px; white-space: nowrap; }

/* floating panels */
.panel { position: absolute; width: 174px; background: #474747; border: 1px solid #222; box-shadow: 0 1px 3px rgba(0,0,0,.5); border-radius: 3px 3px 0 0; font-size: 7px; }
.character { left: 124px; top: 425px; }
.charstyles { left: 835px; top: 204px; }
.paragraph { left: 849px; top: 371px; }
.ptop { height: 10px; background: #2b2b2b; display: flex; justify-content: flex-end; gap: 7px; padding-right: 4px; line-height: 10px; color: #ddd; }
.ptop button { font-size: 10px; line-height: 10px; font-weight: bold; }
.ptabs { display: flex; height: 14px; background: #333; line-height: 13px; font-weight: bold; align-items: center; color: #999; }
.ptabs span { padding: 0 6px; height: 14px; white-space: nowrap; font-size: 8px; }
.ptabs .cur { background: #474747; color: #eee; padding-left: 3px; }
.ptabs .cur::before { content: "◇"; font-size: 7px; margin-right: 2px; }
.ptabs svg { margin-left: auto; margin-right: 1px; }
.pbody { padding: 6px 4px 0; display: flex; flex-direction: column; }
.pbody > .combo { margin: 0 0 6px 2px; }
.pbody > .combo + .combo { margin-bottom: 4px; }
.pairs { display: grid; grid-template-columns: 1fr 1fr; column-gap: 5px; grid-auto-rows: 14px; row-gap: 3px; align-items: center; }
.line { border-top: 1px solid #3a3a3a; }
.pbody > .line { padding-top: 3px; padding-bottom: 2px; }
.pbody > .lang { display: grid; grid-template-columns: 1fr 103px; gap: 6px; align-items: center; height: 25px; text-align: right; }
.applied { display: flex; justify-content: space-between; height: 17px; align-items: center; padding: 0 3px; border-bottom: 1px solid #333; font-size: 7px; }
.listwrap { display: flex; height: 94px; }
.listwrap ul { flex: 1; margin: 0; padding: 0; list-style: none; }
.listwrap li { height: 16px; display: flex; justify-content: space-between; align-items: center; padding: 2px 2px 0 27px; border-bottom: 1px solid #3a3a3a; }
.listwrap li svg { width: 12px; height: 11px; margin-bottom: 3px; }
.listwrap .sel { background: #465468; color: #fff; font-weight: bold; }
.mini { width: 10px; background: #383838; display: flex; flex-direction: column; justify-content: space-between; padding: 4px 1px; opacity: .7; }
.pfoot { display: grid; grid-template-columns: 1fr 14px 14px 14px; column-gap: 10px; padding: 0 20px 1px 5px; height: 14px; }
.pfoot svg { width: 13px; height: 11px; }
.charstyles .grip { margin: 0 auto; }
.alignrow { display: flex; justify-content: space-between; padding-bottom: 6px; }
.alignrow div { display: flex; gap: 4px; }
.alignrow svg { width: 13px; height: 12px; }
.paragraph .pbody { padding-top: 4px; }
.paragraph .pairs { row-gap: 2px; padding-bottom: 4px; }
.pbody .opt { display: grid; grid-template-columns: 10px 1fr 14px 58px; column-gap: 5px; align-items: center; height: 20px; padding: 0 4px 0 3px; font-size: 8px; }
.pbody .opt:last-child { grid-template-columns: 10px 1fr 14px 18px; column-gap: 8px; }
.opt:last-child label { margin-left: -3px; }
.opt input { appearance: none; width: 10px; height: 10px; border: 1px solid #333; background: #505050; }
.opt svg.on { width: 14px; outline: 2px solid #2c2c2c; }
.tint { background: #999; }
.tint i { width: 10px; background: #3a8fb8; flex: none; }

/* color picker */
.dialog { position: absolute; left: 365px; top: 200px; width: 457px; padding: 0 7px 6px 6px; background: #d4689f; border: 1px solid #a84f7e; }
.dialog h1 { margin: 0; font: 12px/23px "Open Sans", sans-serif; color: #47203a; text-align: center; }
.dbody { display: flex; height: 254px; background: #474747; padding: 13px 12px; font-size: 10px; line-height: 14px; }
.dbody h2 { margin: 0 0 6px; font: 10px/14px "Noto Sans", sans-serif; white-space: nowrap; }
.space { width: 206px; }
.field { position: relative; height: 209px; border: 1px solid #222; background: linear-gradient(#0f0, #000), linear-gradient(90deg, #f00, #f0f); background-blend-mode: screen; }
.mark { position: absolute; left: 122px; bottom: 0; width: 28px; height: 12px; stroke: #fff; stroke-width: 1.5; }
.slider { position: relative; width: 16px; margin: 20px 14px 0 12px; height: 209px; border: 1px solid #222; background: linear-gradient(#ff00aa, #0000aa); }
.slider svg { position: absolute; left: -3px; top: -3px; width: 20px; height: 8px; fill: #fff; stroke: none; }
.values { flex: 1; display: grid; grid-template-columns: 48px 1fr; column-gap: 11px; grid-template-rows: 82px 1fr; }
.swatch { justify-self: end; width: 48px; height: 45px; background: #000; padding: 1px; margin-right: -13px; }
.swatch i { display: block; height: 22px; background: #ff00aa; }
.actions { display: grid; grid-template-rows: 16px 14px 14px; row-gap: 9px; width: 98px; justify-self: end; }
.actions button { position: relative; background: linear-gradient(#595959, #4b4b4b); border: 1px solid #383838; white-space: nowrap; line-height: 12px; }
.actions .ok { border: 1px solid #c4853a; background: #3f3f3f; line-height: 14px; }
.pointer { position: absolute; left: 60px; top: 4px; width: 10px; height: 8px; border-radius: 4px; background: #b8171c; }
.rgb, .cmyk { display: grid; grid-auto-rows: 14px; row-gap: 6px; align-content: start; align-items: center; }
.rgb { grid-template-columns: 8px 16px 32px; column-gap: 3px; margin-left: -1px; }
.blank { grid-column: 1 / -1; }
.cmyk { grid-template-columns: 13px 32px 16px; margin-left: 27px; column-gap: 1px; }
.cmyk span { padding-left: 6px; }
.hex { grid-column: 1 / -1; display: grid; grid-template-columns: 13px 47px 14px; column-gap: 1px; align-items: center; }
.hex svg { margin-left: 8px; }
.dbody input { height: 14px; border: 1px solid #777; background: #a0a0a0; color: #222; padding-left: 1px; width: 100%; }
.dbody input[type=radio] { appearance: none; width: 8px; height: 8px; border-radius: 4px; padding: 0; background: #444; border: 1px solid #383838; }
.dbody input[type=radio]:checked { background: radial-gradient(#fff 35%, #444 45%); }
```
